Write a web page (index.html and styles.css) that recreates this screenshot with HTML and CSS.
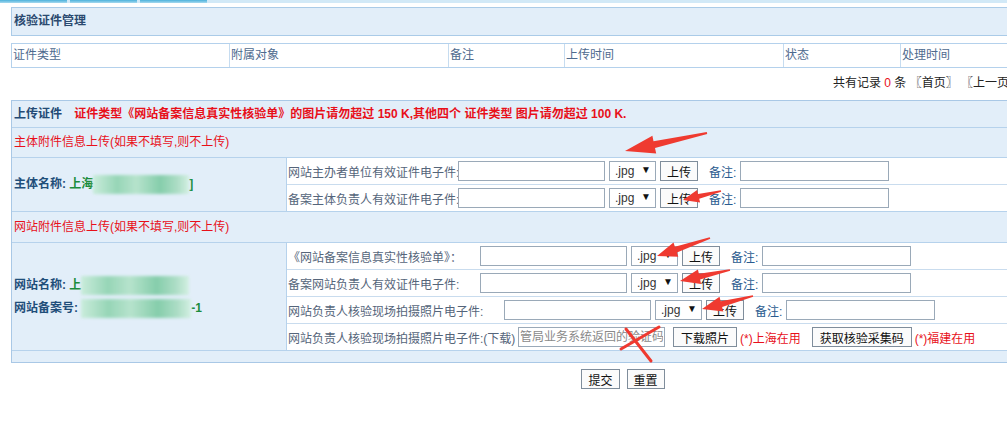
FILE: index.html
```html
<!DOCTYPE html>
<html lang="zh-CN">
<head>
    <meta charset="UTF-8">
    <title>核验证件管理</title>
    <link rel="stylesheet" href="styles.css">
</head>
<body>
    <div class="tabs"><span></span><span></span><span></span></div>

    <div class="wrap">
        <div class="title">核验证件管理</div>

        <!-- 列表表头 -->
        <div class="list-head">
            <div>证件类型</div>
            <div>附属对象</div>
            <div>备注</div>
            <div>上传时间</div>
            <div>状态</div>
            <div>处理时间</div>
        </div>
        <div class="pager">共有记录 <span class="num">0</span> 条 〖首页〗 〖上一页〗 〖下一页〗 〖尾页〗</div>

        <!-- 上传证件 -->
        <div class="upload">
            <div class="hd">
                <b>上传证件</b>
                <span class="warn">证件类型《网站备案信息真实性核验单》的图片请勿超过 150 K,其他四个 证件类型 图片请勿超过 100 K.</span>
            </div>

            <div class="sub">主体附件信息上传(如果不填写,则不上传)</div>
            <div class="grp">
                <div class="left">
                    <div><b>主体名称:</b> <span class="val">上海</span><span class="blur w96"></span><span class="val">]</span></div>
                </div>
                <div class="right">
                    <div class="line">
                        <span class="lbl l170">网站主办者单位有效证件电子件:</span>
                        <input type="text" class="file">
                        <span class="sel"><select><option>.jpg</option></select></span>
                        <button class="btn">上传</button>
                        <span class="note">备注:</span>
                        <input type="text" class="memo">
                    </div>
                    <div class="line">
                        <span class="lbl l170">备案主体负责人有效证件电子件:</span>
                        <input type="text" class="file">
                        <span class="sel"><select><option>.jpg</option></select></span>
                        <button class="btn">上传</button>
                        <span class="note">备注:</span>
                        <input type="text" class="memo">
                    </div>
                </div>
            </div>

            <div class="sub tall">网站附件信息上传(如果不填写,则不上传)</div>
            <div class="grp">
                <div class="left site">
                    <div><b>网站名称:</b> <span class="val">上</span><span class="blur w108"></span></div>
                    <div><b>网站备案号:</b> <span class="blur w110"></span><span class="val">-1</span></div>
                </div>
                <div class="right">
                    <div class="line">
                        <span class="lbl l192">《网站备案信息真实性核验单》：</span>
                        <input type="text" class="file">
                        <span class="sel"><select><option>.jpg</option></select></span>
                        <button class="btn">上传</button>
                        <span class="note">备注:</span>
                        <input type="text" class="memo">
                    </div>
                    <div class="line">
                        <span class="lbl l192">备案网站负责人有效证件电子件:</span>
                        <input type="text" class="file">
                        <span class="sel"><select><option>.jpg</option></select></span>
                        <button class="btn">上传</button>
                        <span class="note">备注:</span>
                        <input type="text" class="memo">
                    </div>
                    <div class="line">
                        <span class="lbl l216">网站负责人核验现场拍摄照片电子件:</span>
                        <input type="text" class="file">
                        <span class="sel"><select><option>.jpg</option></select></span>
                        <button class="btn">上传</button>
                        <span class="note">备注:</span>
                        <input type="text" class="memo">
                    </div>
                    <div class="line">
                        <span class="lbl l230">网站负责人核验现场拍摄照片电子件:(下载)</span>
                        <input type="text" class="file code" placeholder="管局业务系统返回的验证码">
                        <button class="btn wide">下载照片</button>
                        <span class="tip">(*)上海在用</span>
                        <button class="btn wide get">获取核验采集码</button>
                        <span class="tip">(*)福建在用</span>
                    </div>
                </div>
            </div>
            <div class="foot"></div>
        </div>

        <div class="actions">
            <button class="btn">提交</button>
            <button class="btn">重置</button>
        </div>
    </div>

    <!-- 截图上的红色标注 -->
    <svg class="marks" width="1007" height="430" viewBox="0 0 1007 430">
        <g fill="#ef3a30">
            <polygon points="706.8,132 653.5,141.2 652.4,135.8 625,151 656.2,153.4 655,148 707.2,134"/>
            <polygon points="720.8,190.2 698,193.9 697.1,190 683,200 700.1,202.6 699.2,198.7 721.2,191.8"/>
            <polygon points="709.7,237.2 674.9,246.8 673.5,242.5 657,256 678.3,256.7 676.9,252.4 710.3,238.8"/>
            <polygon points="729.8,269.2 698.9,273.8 697.9,269.4 680,281 701.1,284 700.1,279.6 730.2,270.8"/>
            <polygon points="752.8,295.2 720.7,301.2 719.5,296.8 702,309 723.3,311.4 722.1,307 753.2,296.8"/>
        </g>
        <g stroke="#ef3a30" stroke-width="3" stroke-linecap="round" fill="none">
            <path d="M621 349 L659 327"/>
            <path d="M626 329 L651 361"/>
        </g>
    </svg>
</body>
</html>
```

FILE: styles.css
```css
html, body { margin: 0; padding: 0; overflow: hidden; }
body {
    font-family: "Liberation Sans", "Noto Sans CJK SC", sans-serif;
    font-size: 12px;
    background: #fff;
    color: #333;
    position: relative;
    width: 1007px;
    height: 430px;
}

/* 顶部标签条 */
.tabs { height: 3px; background: #d2e9f7; display: flex; gap: 3px; }
.tabs span { width: 67px; background: linear-gradient(#4cb2dc, #a6d9ef); }

.wrap { margin: 4px 0 0 11px; width: 1224px; }

.title {
    height: 27px; line-height: 27px;
    border: 1px solid #aacbe8;
    background: #e2eef9;
    padding-left: 2px;
    font-weight: bold;
    color: #2b4a70;
}

.list-head {
    margin-top: 7px;
    display: grid;
    grid-template-columns: 217px 219px 116px 219px 117px 1fr;
    border: 1px solid #b4d1ec;
    height: 23px;
}
.list-head div {
    line-height: 23px;
    padding-left: 1px;
    color: #4e6a8e;
    border-left: 1px solid #c6dcf0;
}
.list-head div:first-child { border-left: none; }

.pager {
    padding: 5px 0 0 822px;
    height: 20px; line-height: 20px;
    margin-bottom: 7px;
    white-space: nowrap;
    color: #222;
}
.pager .num { color: #e8101a; }

/* 上传区域 */
.upload { border: 1px solid #a9c8e6; background: #e2eef9; }
.upload .hd { height: 26px; line-height: 26px; padding-left: 2px; }
.upload .hd b { color: #234a75; }
.upload .hd .warn { margin-left: 9px; color: #e8101a; font-weight: bold; }

.sub {
    height: 29px; line-height: 29px;
    border-top: 1px solid #b6d2ec;
    padding-left: 2px;
    color: #e8101a;
}
.sub.tall { height: 30px; line-height: 30px; }

.grp { display: flex; border-top: 1px solid #b6d2ec; }
.grp .left {
    width: 272px;
    padding-left: 2px;
    border-right: 1px solid #b6d2ec;
    display: flex; flex-direction: column; justify-content: center;
    line-height: 19px;
}
.grp .left.site { line-height: 23px; }
.grp .left b { color: #1f4e7a; }
.grp .left .val { color: #1a8c3c; font-weight: bold; }

.blur {
    display: inline-block;
    height: 19px;
    vertical-align: middle;
    background: linear-gradient(90deg, #c7ecd8 0%, #8fd3b0 25%, #b2e2c8 45%, #7ccaa3 70%, #a8dcc1 88%, #d2f0e0 100%);
    filter: blur(1.5px);
    opacity: 0.9;
}
.w96 { width: 96px; }
.w108 { width: 108px; }
.w110 { width: 110px; }

.right { flex: 1; background: #fff; }
.line {
    height: 26px;
    display: flex; align-items: center;
    padding-left: 1px;
    border-top: 1px solid #c9dcee;
    white-space: nowrap;
}
.line:first-child { border-top: none; }
.lbl { color: #55657a; flex: none; overflow: visible; }
.l170 { width: 170px; }
.l192 { width: 192px; }
.l216 { width: 216px; }
.l230 { width: 230px; }

input.file, input.memo {
    box-sizing: border-box;
    height: 20px;
    border: 1px solid #9aa9b8;
    padding: 0 2px;
    font: inherit;
    margin: 0;
    background: #fff;
}
input.file { width: 147px; }
input.memo { width: 149px; margin-left: 4px; }
input.code { padding: 0 1px; }
input.code::placeholder { color: #8a8a8a; }

.sel { position: relative; margin-left: 4px; }
.sel select {
    -webkit-appearance: none; appearance: none;
    box-sizing: border-box;
    width: 47px; height: 20px;
    border: 1px solid #9aa9b8;
    border-radius: 0;
    background: #fff;
    padding: 0 0 0 5px;
    font: inherit;
    color: #333;
    display: block;
}
.sel::after {
    content: "▼";
    position: absolute;
    right: 5px; top: 3px;
    font-size: 10px;
    color: #111;
    pointer-events: none;
}

.btn {
    box-sizing: border-box;
    height: 20px;
    padding: 0 6px;
    border: 1px solid #7f8d9b;
    background: #fbfbfb;
    font: inherit;
    color: #111;
    margin-left: 4px;
    cursor: pointer;
}
.btn.wide { margin-left: 8px; padding: 0 7px; }
.btn.get { margin-left: 11px; }
.note { color: #2a5b8f; margin-left: 11px; }
.tip { color: #e8101a; margin-left: 3px; }

.foot { height: 11px; border-top: 1px solid #b6d2ec; }

.actions { display: flex; justify-content: center; gap: 7px; margin-top: 6px; }
.actions .btn { margin: 0; height: 20px; }

.marks { position: absolute; left: 0; top: 0; pointer-events: none; }
```
